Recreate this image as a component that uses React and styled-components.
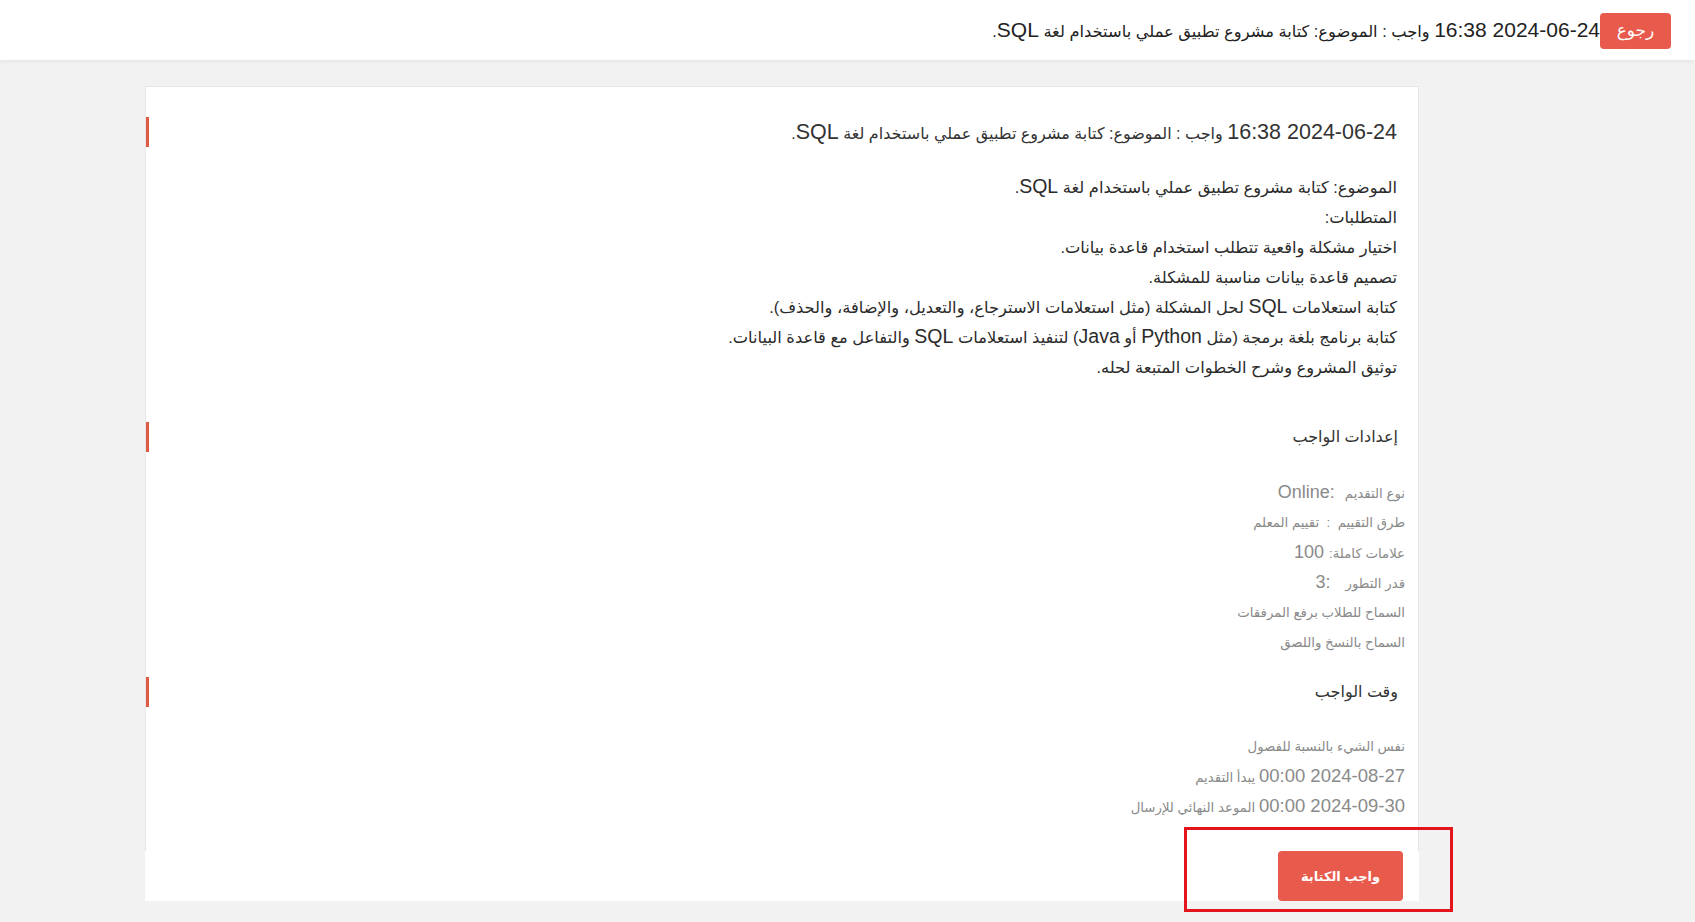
import React from 'react'
import styled, { createGlobalStyle } from 'styled-components'

const GlobalStyle = createGlobalStyle`
  html, body {
    margin: 0;
    padding: 0;
    background: #f2f2f2;
    font-family: "Liberation Sans", "DejaVu Sans", Arial, sans-serif;
  }
`

const homework = {
  title: '2024-06-24 16:38 واجب : الموضوع: كتابة مشروع تطبيق عملي باستخدام لغة SQL.',
  lines: [
    'الموضوع: كتابة مشروع تطبيق عملي باستخدام لغة SQL.',
    'المتطلبات:',
    'اختيار مشكلة واقعية تتطلب استخدام قاعدة بيانات.',
    'تصميم قاعدة بيانات مناسبة للمشكلة.',
    'كتابة استعلامات SQL لحل المشكلة (مثل استعلامات الاسترجاع، والتعديل، والإضافة، والحذف).',
    'كتابة برنامج بلغة برمجة (مثل Python أو Java) لتنفيذ استعلامات SQL والتفاعل مع قاعدة البيانات.',
    'توثيق المشروع وشرح الخطوات المتبعة لحله.',
  ],
}

// label is small arabic text, value is the bigger latin/number part
const settings = [
  { label: 'نوع التقديم', value: '  :Online' },
  { label: 'طرق التقييم  :  تقييم المعلم' },
  { label: 'علامات كاملة:', value: ' 100' },
  { label: 'قدر التطور', value: '   :3' },
  { label: 'السماح للطلاب برفع المرفقات' },
  { label: 'السماح بالنسخ واللصق' },
]

const times = [
  { label: 'نفس الشيء بالنسبة للفصول' },
  { value: '2024-08-27 00:00', label: ' يبدأ التقديم' },
  { value: '2024-09-30 00:00', label: ' الموعد النهائي للإرسال' },
]

// latin words / dates render bigger than the arabic around them
const latinRun = /([A-Za-z0-9](?:[A-Za-z0-9:\-. ]*[A-Za-z0-9])?)/

function Mixed({ text, size }) {
  return text.split(latinRun).map((part, i) =>
    i % 2 ? <Latin key={i} size={size}>{part}</Latin> : part
  )
}

export default function App() {
  return (
    <Page dir="rtl">
      <GlobalStyle />
      <TopBar>
        <BackButton>رجوع</BackButton>
        <TopTitle><Mixed text={homework.title} size={21} /></TopTitle>
      </TopBar>

      <Main>
        <Card>
          <CardBody>
            <SectionHead big><Mixed text={homework.title} size={21.5} /></SectionHead>
            <Description>
              {homework.lines.map((l, i) => <p key={i}><Mixed text={l} size={19.5} /></p>)}
            </Description>

            <SectionHead>إعدادات الواجب</SectionHead>
            <InfoList>
              {settings.map((s, i) => (
                <InfoRow key={i}>
                  <Label>{s.label}</Label>
                  {s.value && <Value>{s.value}</Value>}
                </InfoRow>
              ))}
            </InfoList>

            <SectionHead small>وقت الواجب</SectionHead>
            <InfoList times>
              {times.map((t, i) => (
                <InfoRow key={i}>
                  {t.value && <Value times>{t.value}</Value>}
                  <Label>{t.label}</Label>
                </InfoRow>
              ))}
            </InfoList>
          </CardBody>

          <Footer>
            <SubmitWrap>
              <SubmitButton>واجب الكتابة</SubmitButton>
              <Highlight />
            </SubmitWrap>
          </Footer>
        </Card>
      </Main>
    </Page>
  )
}

const Page = styled.div`
  min-height: 922px;
  background: #f2f2f2;
`

const Latin = styled.span`
  font-size: ${p => p.size}px;
  line-height: 1;
`

const TopBar = styled.header`
  height: 60px;
  background: #fff;
  box-shadow: 0 1px 4px rgba(0, 0, 0, 0.07);
  display: flex;
  align-items: center;
  padding-right: 24px;
  box-sizing: border-box;
`

const BackButton = styled.button`
  width: 71px;
  height: 36px;
  margin-top: 1px;
  border: none;
  border-radius: 4px;
  background: #e85a4b;
  color: #fff;
  font-family: inherit;
  font-size: 17px;
  cursor: pointer;
`

const TopTitle = styled.div`
  font-size: 16.3px;
  color: #222;
  white-space: nowrap;
`

const Main = styled.main`
  padding: 26px 276px 20px 145px;
`

const Card = styled.section`
  width: 1274px;
  background: #fff;
`

const CardBody = styled.div`
  border: 1px solid #e6e6e6;
  border-bottom: none;
  padding: 30px 0 30px;
`

const SectionHead = styled.h2`
  margin: ${p => (p.big ? '0' : p.small ? '20px 0 0' : '40px 0 0')};
  height: 30px;
  line-height: ${p => (p.big ? '34px' : '30px')};
  border-left: 3px solid #e05a48;
  padding-right: ${p => (p.big ? '21px' : '20px')};
  font-size: 16px;
  font-weight: normal;
  color: #333;
  white-space: nowrap;
`

const Description = styled.div`
  margin-top: 25px;
  padding-right: 21px;
  font-size: 16.3px;
  line-height: 30px;
  color: #2b2b2b;

  p {
    margin: 0;
    height: 30px;
  }
`

const InfoList = styled.div`
  margin-top: ${p => (p.times ? '24px' : '25px')};
  padding-right: 13px;
  color: #8a8a8a;
`

const InfoRow = styled.div`
  height: 30px;
  line-height: 30px;
  white-space: pre;
`

const Label = styled.span`
  font-size: 13.3px;
`

const Value = styled.span`
  font-size: ${p => (p.times ? '18.5px' : '18px')};
`

const Footer = styled.div`
  height: 50px;
  display: flex;
  justify-content: flex-start;
  padding-right: 16px;
`

const SubmitWrap = styled.div`
  position: relative;
`

const SubmitButton = styled.button`
  width: 125px;
  height: 50px;
  border: none;
  border-radius: 4px;
  background: #e85a4b;
  color: #fff;
  font-family: inherit;
  font-size: 13px;
  font-weight: bold;
  cursor: pointer;
`

const Highlight = styled.div`
  position: absolute;
  left: -94px;
  right: -50px;
  top: -24px;
  bottom: -11px;
  border: 3px solid #e3141b;
  pointer-events: none;
`
